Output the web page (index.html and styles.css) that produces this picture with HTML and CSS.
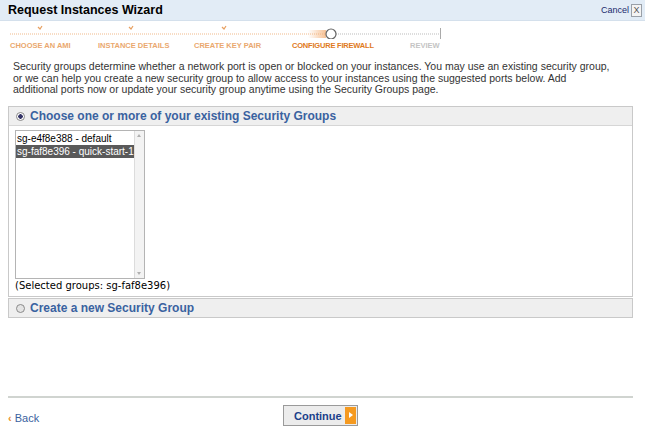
FILE: index.html
```html
<!DOCTYPE html>
<html>
	<head>
		<title>Request Instances Wizard</title>
		<link rel="stylesheet" href="styles.css">
	</head>
	<body>
		<div class="titlebar">
			<h1>Request Instances Wizard</h1>
			<a class="cancel" href="#">Cancel <span class="close">X</span></a>
		</div>

		<div class="steps">
			<svg class="track" width="445" height="14" viewBox="0 0 445 14">
				<defs>
					<linearGradient id="glow" x1="0" x2="1">
						<stop offset="0" stop-color="#f5b27a" stop-opacity="0"/>
						<stop offset="1" stop-color="#f5b27a" stop-opacity="0.8"/>
					</linearGradient>
				</defs>
				<line x1="10" y1="9" x2="326" y2="9" stroke="#f0b98a" stroke-width="1" stroke-dasharray="1 1"/>
				<rect x="308" y="5" width="18" height="8" fill="url(#glow)"/>
				<line x1="336" y1="9" x2="440" y2="9" stroke="#bbbbbb" stroke-width="1" stroke-dasharray="1 1"/>
				<line x1="440.5" y1="3" x2="440.5" y2="14" stroke="#aaaaaa"/>
				<circle cx="331" cy="9" r="5" fill="#ffffff" stroke="#666666" stroke-width="1.2"/>
				<path d="M38 2 l2 2 l2 -3" fill="none" stroke="#e8a060" stroke-width="1.2"/>
				<path d="M129 2 l2 2 l2 -3" fill="none" stroke="#e8a060" stroke-width="1.2"/>
				<path d="M222 2 l2 2 l2 -3" fill="none" stroke="#e8a060" stroke-width="1.2"/>
			</svg>
			<ol class="labels">
				<li class="done">Choose an AMI</li>
				<li class="done">Instance Details</li>
				<li class="done">Create Key Pair</li>
				<li class="current">Configure Firewall</li>
				<li class="todo">Review</li>
			</ol>
		</div>

		<p class="intro">
			Security groups determine whether a network port is open or blocked on your instances. You may use an existing security group,<br>
			or we can help you create a new security group to allow access to your instances using the suggested ports below. Add<br>
			additional ports now or update your security group anytime using the Security Groups page.
		</p>

		<div class="panel">
			<label class="panel-head"><span class="radio checked"></span>Choose one or more of your existing Security Groups</label>
			<div class="panel-body">
				<div class="listbox">
					<div class="options">
						<div class="option">sg-e4f8e388 - default</div>
						<div class="option selected">sg-faf8e396 - quick-start-1</div>
					</div>
					<div class="scrollbar">
						<span class="arrow up"></span>
						<span class="arrow down"></span>
					</div>
				</div>
				<div class="selected-note">(Selected groups: sg-faf8e396)</div>
			</div>
		</div>

		<div class="panel">
			<label class="panel-head"><span class="radio"></span>Create a new Security Group</label>
		</div>

		<div class="footer">
			<a class="back" href="#"><span class="chev">&lsaquo;</span> Back</a>
			<button class="continue">Continue <span class="go"></span></button>
		</div>
	</body>
</html>
```

FILE: styles.css
```css
body {
	margin: 0;
	width: 645px;
	height: 436px;
	font-family: "Liberation Sans", Arial, sans-serif;
	font-size: 11px;
	color: #333333;
	background: #ffffff;
}

.titlebar {
	display: flex;
	align-items: center;
	justify-content: space-between;
	height: 20px;
	padding: 0 3px 0 8px;
	background: #e2ecf6;
	border-bottom: 1px solid #d4e0ec;
}

.titlebar h1 {
	margin: 0;
	font-size: 12.5px;
	font-weight: bold;
	color: #000000;
}

.cancel {
	display: flex;
	align-items: center;
	gap: 2px;
	font-size: 9px;
	color: #1a2a6c;
	text-decoration: none;
}

.close {
	display: inline-block;
	width: 9px;
	height: 11px;
	line-height: 11px;
	text-align: center;
	border: 1px solid #9aa0a8;
	background: #f4f4f4;
	color: #555555;
	font-size: 9px;
}

.track {
	display: block;
	margin-top: 4px;
}

.labels {
	display: grid;
	grid-template-columns: 88px 96px 98px 118px auto;
	margin: 2px 0 0;
	padding: 0 0 0 10px;
	list-style: none;
	font-size: 7.5px;
	line-height: 9px;
	font-weight: bold;
	text-transform: uppercase;
}

.labels .done {
	color: #eaa86e;
}

.labels .current {
	color: #e07a1c;
	letter-spacing: -0.2px;
}

.labels .todo {
	color: #c4c4c4;
}

.intro {
	margin: 11px 12px 0 13px;
	font-size: 10.5px;
	line-height: 11.7px;
	color: #333333;
	white-space: nowrap;
}

.panel {
	margin: 10px 12px 0 8px;
	border: 1px solid #c9c9c9;
}

.panel + .panel {
	margin-top: 1px;
}

.panel-head {
	display: flex;
	align-items: center;
	height: 18px;
	padding-left: 7px;
	background: #efefef;
	font-size: 12px;
	font-weight: bold;
	color: #3a62a0;
}

.panel-body {
	border-top: 1px solid #d6d6d6;
	padding: 4px 6px 4px 6px;
}

.radio {
	width: 7px;
	height: 7px;
	margin-right: 5px;
	border: 1px solid #8a8a8a;
	border-radius: 50%;
	background: #e4e4e4;
}

.radio.checked {
	background: radial-gradient(circle, #333366 0 2px, #ffffff 2.5px);
}

.listbox {
	display: flex;
	width: 128px;
	height: 147px;
	border: 1px solid #b4b4b4;
}

.options {
	flex: 1;
	padding-top: 1px;
}

.option {
	height: 13px;
	line-height: 13px;
	padding-left: 1px;
	font-size: 10px;
	color: #000000;
	white-space: nowrap;
	overflow: hidden;
}

.option.selected {
	background: #5a5a5a;
	color: #ffffff;
}

.scrollbar {
	display: flex;
	flex-direction: column;
	justify-content: space-between;
	width: 12px;
	padding: 3px 0;
	background: #f3f3f3;
	border-left: 1px solid #dcdcdc;
}

.arrow {
	align-self: center;
	width: 0;
	height: 0;
	border-left: 2px solid transparent;
	border-right: 2px solid transparent;
}

.arrow.up {
	border-bottom: 3px solid #b0b0b0;
}

.arrow.down {
	border-top: 3px solid #b0b0b0;
}

.selected-note {
	margin-top: 1px;
	font-family: "DejaVu Sans", Verdana, sans-serif;
	font-size: 10px;
	line-height: 12px;
	color: #000000;
}

.footer {
	display: flex;
	align-items: center;
	margin: 78px 12px 0 8px;
	padding-top: 7px;
	border-top: 2px solid #d0d4d0;
}

.back {
	width: 275px;
	margin-top: 4px;
	font-size: 11px;
	color: #3a62a0;
	text-decoration: none;
}

.chev {
	color: #e8902a;
	font-weight: bold;
}

.continue {
	display: flex;
	align-items: center;
	justify-content: space-between;
	width: 75px;
	height: 21px;
	margin: 0;
	padding: 0 1px 0 10px;
	border: 1px solid #9a9a9a;
	background: #ececec;
	font-family: "Liberation Sans", Arial, sans-serif;
	font-size: 11px;
	font-weight: bold;
	color: #1a3f8a;
}

.go {
	position: relative;
	width: 11px;
	height: 17px;
	background: #f59a20;
}

.go::after {
	content: "";
	position: absolute;
	top: 5px;
	left: 4px;
	border-top: 3.5px solid transparent;
	border-bottom: 3.5px solid transparent;
	border-left: 4px solid #ffffff;
}
```
